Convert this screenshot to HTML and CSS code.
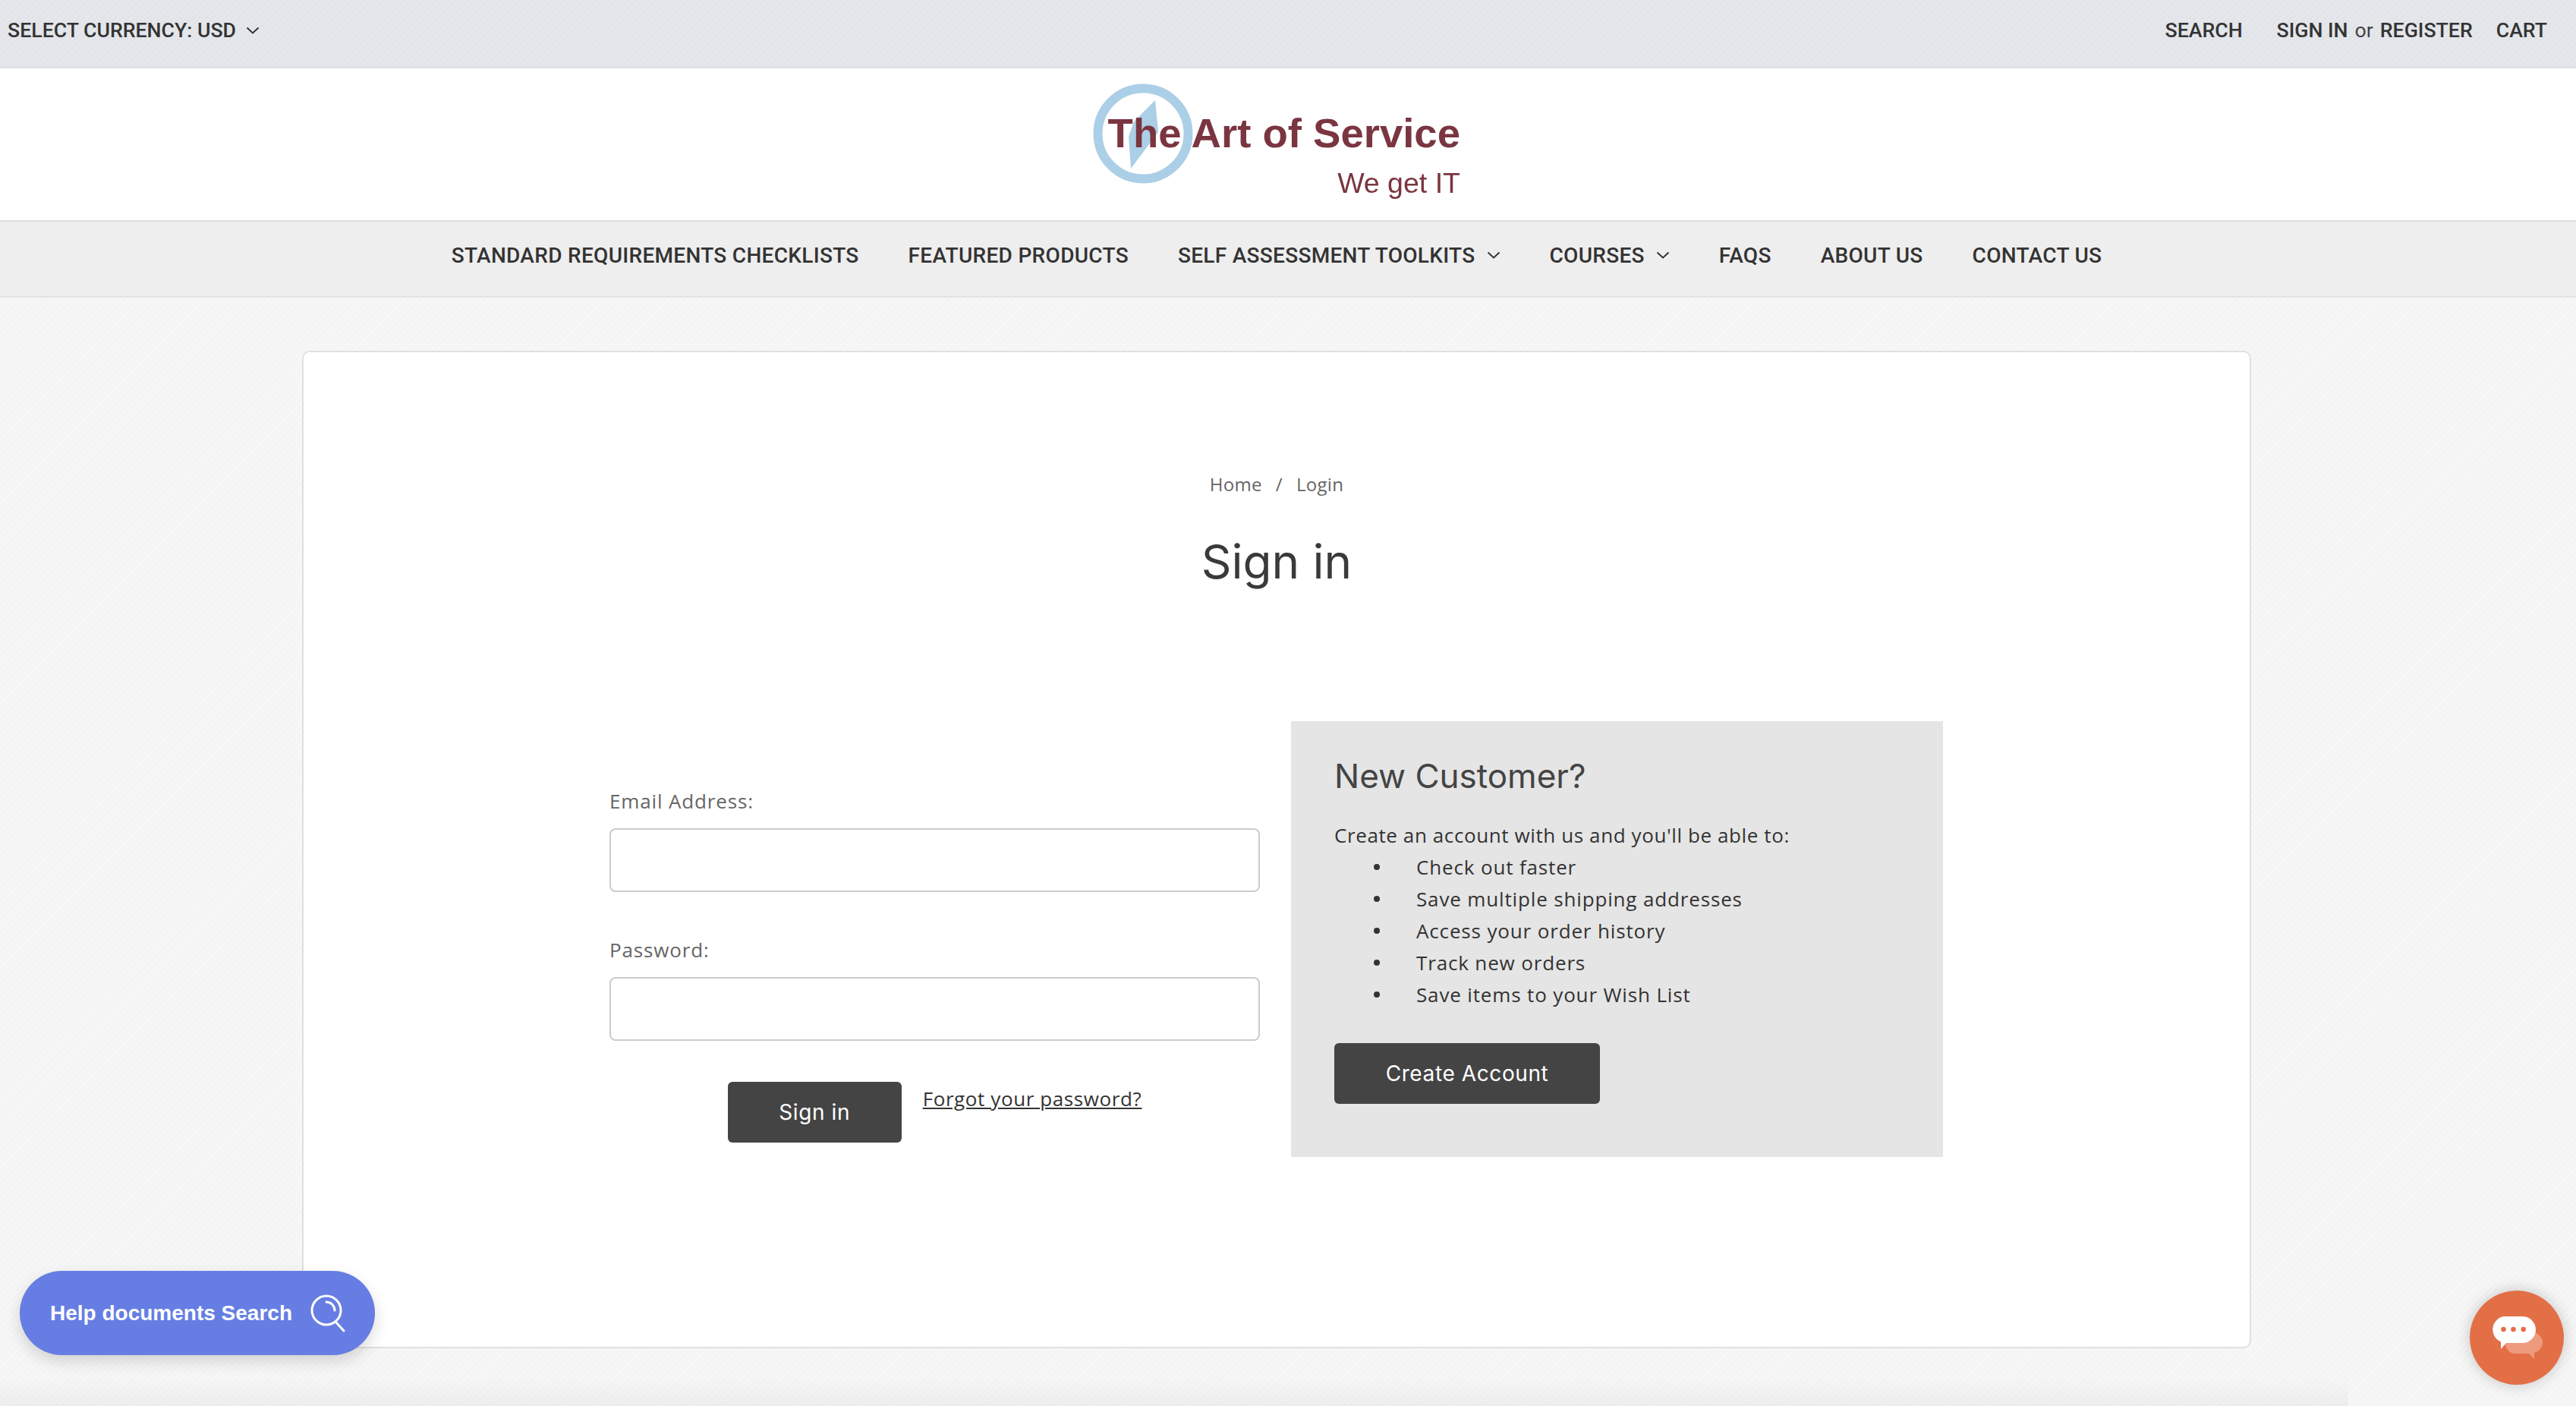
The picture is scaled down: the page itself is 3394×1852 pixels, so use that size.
FILE: index.html
```html
<!DOCTYPE html>
<html lang="en">
<head>
<meta charset="utf-8">
<title>Sign in</title>
<link rel="stylesheet" href="styles.css">
</head>
<body>
<div class="topbar">
  <a class="top-link currency">SELECT CURRENCY: USD
    <svg class="chev" viewBox="0 0 18 10"><path d="M1.5 1.5 9 8.5l7.5-7"/></svg>
  </a>
  <div class="top-right">
    <a class="top-link search">SEARCH</a>
    <span class="account"><a class="top-link">SIGN IN</a><span class="or">or</span><a class="top-link">REGISTER</a></span>
    <a class="top-link">CART</a>
  </div>
</div>
<header class="masthead">
  <div class="logo">
    <svg class="logo-mark" viewBox="0 0 132 132">
      <circle cx="66" cy="66" r="59.5" fill="none" stroke="#abcfe6" stroke-width="12"/>
      <path d="M82 22 86 64 50 112 47 70 54 50Z" fill="#abcfe6"/>
    </svg>
    <div class="logo-name">The Art of Service</div>
    <div class="logo-tag">We get IT</div>
  </div>
</header>
<nav class="mainnav">
  <a>STANDARD REQUIREMENTS CHECKLISTS</a>
  <a>FEATURED PRODUCTS</a>
  <a>SELF ASSESSMENT TOOLKITS<svg class="chev" viewBox="0 0 18 10"><path d="M1.5 1.5 9 8.5l7.5-7"/></svg></a>
  <a>COURSES<svg class="chev" viewBox="0 0 18 10"><path d="M1.5 1.5 9 8.5l7.5-7"/></svg></a>
  <a>FAQS</a>
  <a>ABOUT US</a>
  <a>CONTACT US</a>
</nav>
<main class="card">
  <div class="crumbs"><a>Home</a><span class="sep">/</span><a>Login</a></div>
  <h1 class="title">Sign in</h1>
  <div class="login-row">
    <form class="login-form">
      <label class="field-label">Email Address:</label>
      <input class="field-input" type="email">
      <label class="field-label second">Password:</label>
      <input class="field-input" type="password">
      <div class="actions">
        <button class="btn btn-signin" type="button">Sign in</button>
        <a class="forgot">Forgot your password?</a>
      </div>
    </form>
    <section class="panel">
      <h2 class="panel-title">New Customer?</h2>
      <p class="panel-intro">Create an account with us and you'll be able to:</p>
      <ul class="panel-list">
        <li>Check out faster</li>
        <li>Save multiple shipping addresses</li>
        <li>Access your order history</li>
        <li>Track new orders</li>
        <li>Save items to your Wish List</li>
      </ul>
      <button class="btn btn-create" type="button">Create Account</button>
    </section>
  </div>
</main>
<div class="bottom-shade"></div>
<a class="help-pill">Help documents Search
  <svg class="help-icon" viewBox="0 0 46 50" fill="none" stroke="#fff" stroke-width="3" stroke-linecap="round">
    <circle cx="21" cy="21" r="19"/>
    <path d="M21 10a11 11 0 0 1 11 11"/>
    <path d="M33 36 44 48"/>
  </svg>
</a>
<a class="chat-bubble">
  <svg viewBox="0 0 68 56">
    <path d="M56 20C63 23 68 28 68 34 68 41 63 46 57 48V56L50 49H32C25 49 20 44 18 35Z" fill="#ee9a7e"/>
    <path d="M17.5 0H41.5A17.5 17.5 0 0 1 41.5 35H20L13 43V33.500A17.500 17.500 0 0 1 17.500 0Z" fill="#fff"/>
    <circle cx="16.500" cy="17" r="3.300" fill="#e36f47"/><circle cx="29.500" cy="17" r="3.300" fill="#e36f47"/><circle cx="42.700" cy="17" r="3.300" fill="#e36f47"/>
  </svg>
</a>
</body>
</html>
```

FILE: styles.css
```css
* { box-sizing: border-box; }
html, body { margin: 0; height: 1852px; overflow: hidden; }
body {
  font-family: "Open Sans", sans-serif;
  color: #333;
  background: repeating-linear-gradient(135deg, #f7f7f7 0 3px, #f4f4f4 3px 6px);
}
.topbar {
  height: 90px;
  border-bottom: 2px solid #dcdfe1;
  padding: 0 38px 9px 10px;
  display: flex;
  align-items: center;
  justify-content: space-between;
  background: repeating-linear-gradient(135deg, #e5e7eb 0 3px, #e1e4e8 3px 6px);
}
.top-link {
  font: 500 26.700px Roboto, sans-serif;
  color: #333;
  white-space: nowrap;
}
.currency { display: flex; align-items: center; gap: 13px; }
.top-right { display: flex; align-items: center; }
.search { margin-right: 45px; }
.account { display: flex; align-items: center; margin-right: 31px; }
.or { font: 400 26.700px Roboto, sans-serif; color: #444; margin: 0 9px; }
.chev { width: 18px; height: 10px; fill: none; stroke: #333; stroke-width: 2; }
.masthead {
  height: 200px;
  background: #fff;
  padding-right: 30px;
  display: flex;
  justify-content: center;
}
.logo {
  position: relative;
  width: 484px;
  padding-top: 54px;
  text-align: right;
  color: #7a3540;
  filter: blur(.5px);
}
.logo-mark { position: absolute; left: 0; top: 20px; width: 132px; height: 132px; }
.logo-name { position: relative; font: 700 54.500px/64px "Liberation Sans", sans-serif; white-space: nowrap; }
.logo-tag { font: 400 37.500px/48px "Liberation Sans", sans-serif; margin-top: 9px; }
.mainnav {
  height: 102px;
  background: #eee;
  border-top: 2px solid #dedede;
  border-bottom: 2px solid #e2e2e2;
  padding: 0 30px 10px 0;
  display: flex;
  align-items: center;
  justify-content: center;
  gap: 65px;
}
.mainnav a {
  font: 500 28px Roboto, sans-serif;
  letter-spacing: .3px;
  color: #333;
  display: flex;
  align-items: center;
  white-space: nowrap;
}
.mainnav .chev { margin-left: 15px; }
.card {
  width: 2568px;
  height: 1314px;
  margin: 70px 0 0 398px;
  background: #fff;
  border: 2px solid #e0e0e0;
  border-radius: 10px;
  padding-top: 156px;
}
.crumbs {
  display: flex;
  justify-content: center;
  font: 400 24px/36px "Open Sans", sans-serif;
  letter-spacing: .3px;
  color: #666;
}
.sep { margin: 0 18px; }
.title {
  margin: 44px 0 0;
  text-align: center;
  font: 400 62px/80px Inter, sans-serif;
  color: #3a3a3a;
}
.login-row {
  width: 1757px;
  margin: 170px 0 0 403px;
  display: flex;
  gap: 41px;
}
.login-form { width: 857px; padding-top: 87px; }
.field-label {
  display: block;
  font: 400 26px/36px "Open Sans", sans-serif;
  letter-spacing: .85px;
  color: #666;
  margin-bottom: 18px;
}
.field-label.second { margin-top: 58px; }
.field-input {
  display: block;
  width: 100%;
  height: 84px;
  background: #fff;
  border: 2px solid #ccc;
  border-radius: 8px;
}
.actions {
  margin-top: 54px;
  display: flex;
  justify-content: center;
  align-items: flex-start;
  gap: 28px;
}
.btn {
  height: 80px;
  border: 0;
  border-radius: 6px;
  background: #444;
  color: #fff;
  font: 400 28px Inter, sans-serif;
  letter-spacing: .6px;
  padding: 0;
}
.btn-signin { width: 229px; }
.btn-create { width: 350px; margin-top: 43px; display: block; }
.forgot {
  font: 400 26px/36px "Open Sans", sans-serif;
  letter-spacing: .6px;
  color: #333;
  text-decoration: underline;
  margin-top: 4px;
}
.panel {
  width: 859px;
  height: 574px;
  background: #e5e5e5;
  padding: 45px 0 0 57px;
}
.panel-title { margin: 0; font: 400 44px/54px Inter, sans-serif; color: #444; }
.panel-intro { margin: 30px 0 0; font: 400 26px/42px "Open Sans", sans-serif; letter-spacing: .6px; color: #333; }
.panel-list { margin: 0; padding: 0 0 0 52px; list-style: none; font: 400 26px/42px "Open Sans", sans-serif; letter-spacing: .85px; color: #333; }
.panel-list li { display: flex; align-items: center; gap: 48px; }
.panel-list li::before { content: ""; width: 8px; height: 8px; border-radius: 50%; background: #333; }
.bottom-shade {
  position: absolute;
  left: 0;
  right: 300px;
  bottom: 0;
  height: 40px;
  background: linear-gradient(to bottom, rgba(0,0,0,0), rgba(0,0,0,.035));
}
.help-pill {
  position: absolute;
  left: 26px;
  top: 1674px;
  width: 468px;
  height: 111px;
  border-radius: 56px;
  background: #667ee3;
  box-shadow: 0 8px 20px rgba(0,0,0,.15);
  color: #fff;
  font: 700 28px "Liberation Sans", sans-serif;
  display: flex;
  align-items: center;
  padding-left: 40px;
  gap: 24px;
}
.help-icon { width: 46px; height: 50px; }
.chat-bubble {
  position: absolute;
  left: 3254px;
  top: 1700px;
  width: 124px;
  height: 124px;
  border-radius: 50%;
  background: #e36f47;
  box-shadow: 0 0 20px rgba(0,0,0,.2);
  display: flex;
  align-items: center;
  justify-content: center;
}
.chat-bubble svg { width: 68px; height: 56px; overflow: visible; }
```
